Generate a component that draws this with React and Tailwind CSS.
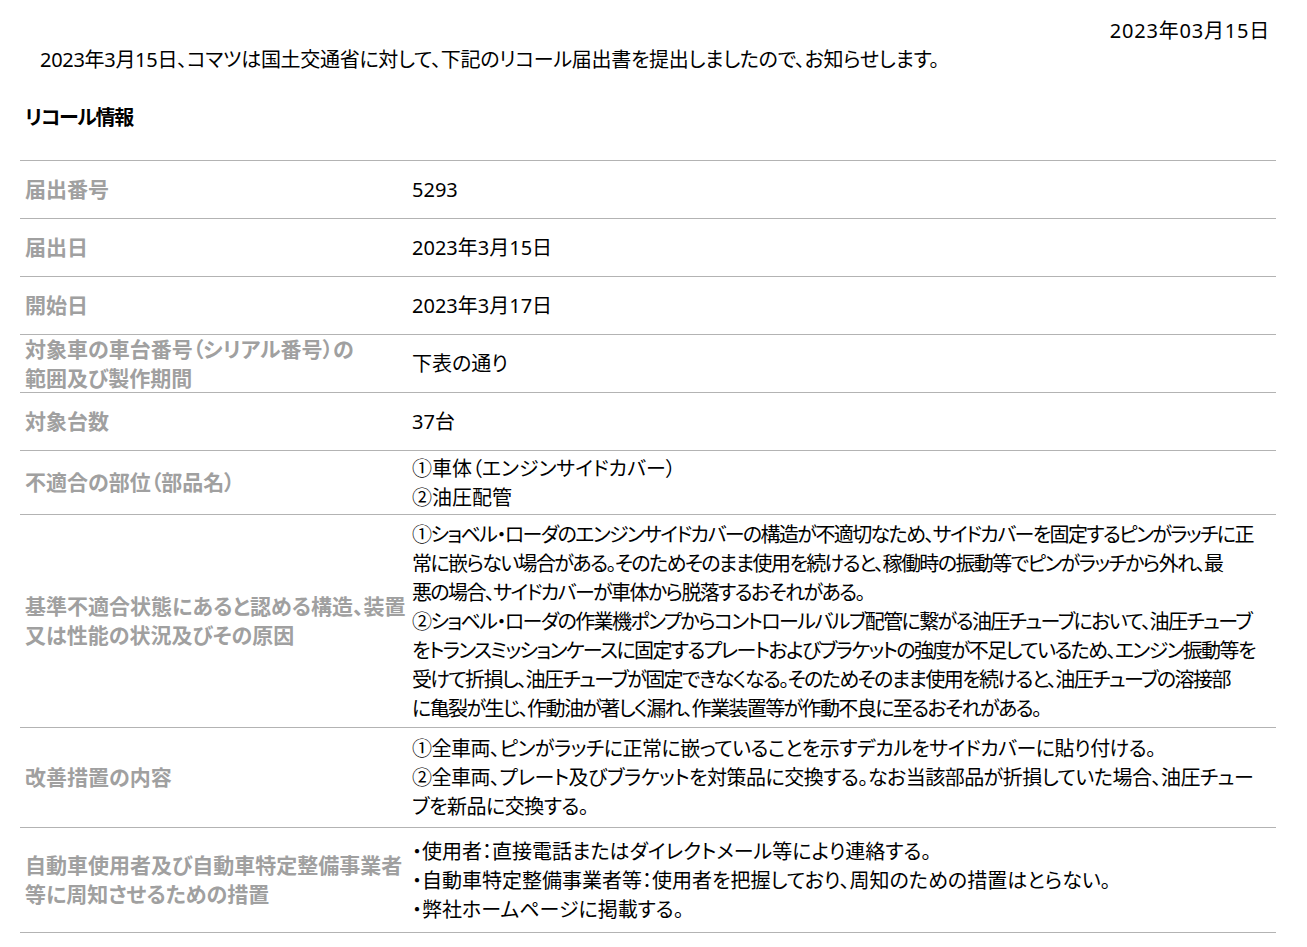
const rows = [
  { label: ['届出番号'], value: ['5293'], h: 'h-[58px]' },
  { label: ['届出日'], value: ['2023年3月15日'], h: 'h-[58px]' },
  { label: ['開始日'], value: ['2023年3月17日'], h: 'h-[58px]' },
  { label: ['対象車の車台番号（シリアル番号）の', '範囲及び製作期間'], value: ['下表の通り'], h: 'h-[58px]' },
  { label: ['対象台数'], value: ['37台'], h: 'h-[58px]' },
  { label: ['不適合の部位（部品名）'], value: ['①車体（エンジンサイドカバー）', '②油圧配管'], h: 'h-[64px]' },
  {
    label: ['基準不適合状態にあると認める構造、装置', '又は性能の状況及びその原因'],
    value: [
      '①ショベル・ローダのエンジンサイドカバーの構造が不適切なため、サイドカバーを固定するピンがラッチに正',
      '常に嵌らない場合がある。そのためそのまま使用を続けると、稼働時の振動等でピンがラッチから外れ、最',
      '悪の場合、サイドカバーが車体から脱落するおそれがある。',
      '②ショベル・ローダの作業機ポンプからコントロールバルブ配管に繋がる油圧チューブにおいて、油圧チューブ',
      'をトランスミッションケースに固定するプレートおよびブラケットの強度が不足しているため、エンジン振動等を',
      '受けて折損し、油圧チューブが固定できなくなる。そのためそのまま使用を続けると、油圧チューブの溶接部',
      'に亀裂が生じ、作動油が著しく漏れ、作業装置等が作動不良に至るおそれがある。',
    ],
    h: 'h-[213px]',
    tight: 'tracking-[-1.6px]',
  },
  {
    label: ['改善措置の内容'],
    value: [
      '①全車両、ピンがラッチに正常に嵌っていることを示すデカルをサイドカバーに貼り付ける。',
      '②全車両、プレート及びブラケットを対策品に交換する。なお当該部品が折損していた場合、油圧チュー',
      'ブを新品に交換する。',
    ],
    h: 'h-[100px]',
    tight: 'tracking-[-0.5px]',
  },
  {
    label: ['自動車使用者及び自動車特定整備事業者', '等に周知させるための措置'],
    value: [
      '・使用者：直接電話またはダイレクトメール等により連絡する。',
      '・自動車特定整備事業者等：使用者を把握しており、周知のための措置はとらない。',
      '・弊社ホームページに掲載する。',
    ],
    h: 'h-[105px]',
  },
];

export default function App() {
  return (
    <div className="min-h-screen bg-white pl-5 pr-[31px] pt-[16px] text-[20px] leading-[29px] text-black [font-family:'Noto_Sans','Noto_Sans_CJK_JP',sans-serif] [font-feature-settings:'palt']">
      <p className="text-right pr-[6px] tracking-[0.8px]">2023年03月15日</p>
      <p className="pl-5 tracking-[-0.3px]">2023年3月15日、コマツは国土交通省に対して、下記のリコール届出書を提出しましたので、お知らせします。</p>

      <h2 className="mt-[29px] pl-[5px] font-bold tracking-[-1.3px]">リコール情報</h2>

      <div className="mt-[28px] border-t border-[#b3b3b3]">
        {rows.map((row, i) => (
          <div key={i} className={`flex items-center border-b border-[#b3b3b3] ${row.h}`}>
            <div className="w-[392px] shrink-0 pl-[5px] text-[21px] font-bold text-[#a0a0a0]">
              {row.label.map((l, j) => (
                <div key={j} className="whitespace-nowrap">{l}</div>
              ))}
            </div>
            <div className={`flex-1 ${row.tight || ''}`}>
              {row.value.map((v, j) => (
                <div key={j} className="whitespace-nowrap">{v}</div>
              ))}
            </div>
          </div>
        ))}
      </div>
    </div>
  );
}
